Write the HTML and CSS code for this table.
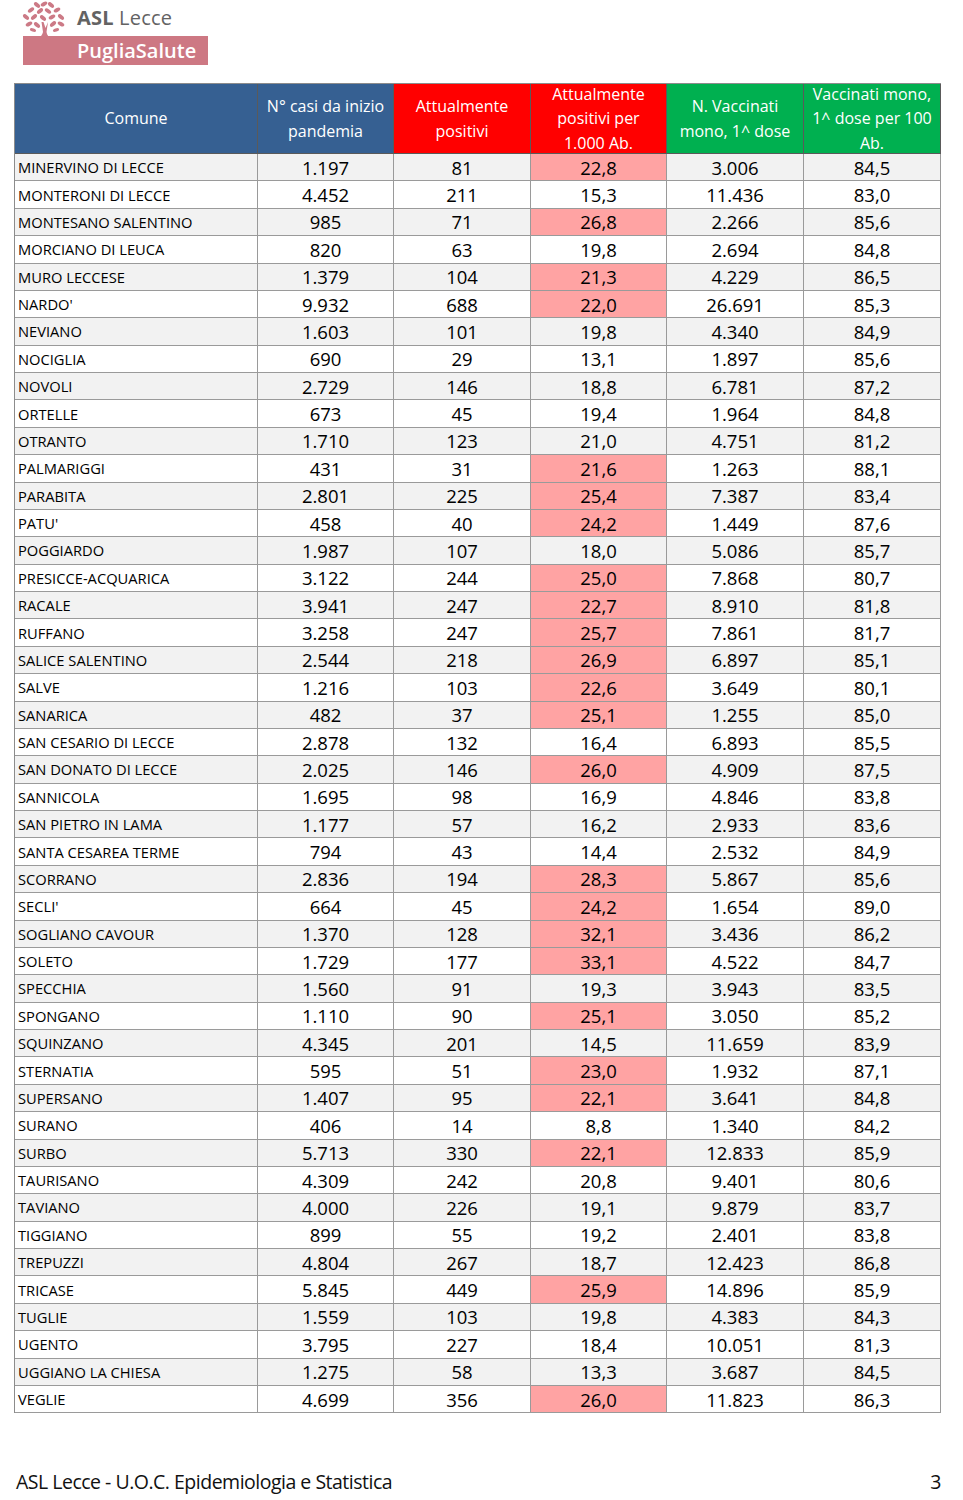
FILE: index.html
```html
<!DOCTYPE html>
<html lang="it">
<head>
<meta charset="utf-8">
<link rel="stylesheet" href="styles.css">
</head>
<body>
<div class="page">
  <header class="logo">
    <svg class="tree" width="48" height="44" viewBox="0 0 48 44">
      <g fill="#cc7a86">
        <ellipse cx="23" cy="4" rx="3.6" ry="1.9" transform="rotate(-30 23 4)"/>
        <ellipse cx="16" cy="5" rx="3.6" ry="1.9" transform="rotate(40 16 5)"/>
        <ellipse cx="30" cy="5" rx="3.6" ry="1.9" transform="rotate(40 30 5)"/>
        <ellipse cx="10" cy="10" rx="3.6" ry="1.9" transform="rotate(-35 10 10)"/>
        <ellipse cx="19" cy="11" rx="3.6" ry="1.9" transform="rotate(-40 19 11)"/>
        <ellipse cx="27" cy="11" rx="3.6" ry="1.9" transform="rotate(35 27 11)"/>
        <ellipse cx="36" cy="10" rx="3.6" ry="1.9" transform="rotate(-30 36 10)"/>
        <ellipse cx="5" cy="17" rx="3.6" ry="1.9" transform="rotate(40 5 17)"/>
        <ellipse cx="13" cy="17" rx="3.6" ry="1.9" transform="rotate(-40 13 17)"/>
        <ellipse cx="22" cy="18" rx="3.6" ry="1.9" transform="rotate(40 22 18)"/>
        <ellipse cx="31" cy="17" rx="3.6" ry="1.9" transform="rotate(-30 31 17)"/>
        <ellipse cx="40" cy="17" rx="3.6" ry="1.9" transform="rotate(40 40 17)"/>
        <ellipse cx="8" cy="24" rx="3.6" ry="1.9" transform="rotate(-30 8 24)"/>
        <ellipse cx="16" cy="25" rx="3.6" ry="1.9" transform="rotate(40 16 25)"/>
        <ellipse cx="32" cy="24" rx="3.6" ry="1.9" transform="rotate(-40 32 24)"/>
        <ellipse cx="40" cy="24" rx="3.6" ry="1.9" transform="rotate(30 40 24)"/>
        <ellipse cx="12" cy="30" rx="3.2" ry="1.7" transform="rotate(20 12 30)"/>
        <ellipse cx="35" cy="30" rx="3.2" ry="1.7" transform="rotate(-20 35 30)"/>
        <path d="M20.5 22 L22 32 Q21 37 15 40 L32 40 Q26 37 25.5 32 L27 22 L24.5 28 L22.5 22 Z"/>
      </g>
    </svg>
    <span class="asl">ASL <span class="lecce">Lecce</span></span>
    <div class="puglia">PugliaSalute</div>
  </header>

  <div class="data" id="grid">
    <div class="th h-blue">Comune</div>
    <div class="th h-blue">N° casi da inizio<br>pandemia</div>
    <div class="th h-red">Attualmente<br>positivi</div>
    <div class="th h-red">Attualmente<br>positivi per<br>1.000 Ab.</div>
    <div class="th h-green">N. Vaccinati<br>mono, 1^ dose</div>
    <div class="th h-green">Vaccinati mono,<br>1^ dose per 100<br>Ab.</div>
  </div>

  <footer class="footer">
    <span>ASL Lecce - U.O.C. Epidemiologia e Statistica</span>
    <span>3</span>
  </footer>
</div>
<script src="app.js"></script>
</body>
</html>
```
FILE: app.js
```js
const data = [
["MINERVINO DI LECCE","1.197","81","22,8","3.006","84,5",1],
["MONTERONI DI LECCE","4.452","211","15,3","11.436","83,0",0],
["MONTESANO SALENTINO","985","71","26,8","2.266","85,6",1],
["MORCIANO DI LEUCA","820","63","19,8","2.694","84,8",0],
["MURO LECCESE","1.379","104","21,3","4.229","86,5",1],
["NARDO'","9.932","688","22,0","26.691","85,3",1],
["NEVIANO","1.603","101","19,8","4.340","84,9",0],
["NOCIGLIA","690","29","13,1","1.897","85,6",0],
["NOVOLI","2.729","146","18,8","6.781","87,2",0],
["ORTELLE","673","45","19,4","1.964","84,8",0],
["OTRANTO","1.710","123","21,0","4.751","81,2",0],
["PALMARIGGI","431","31","21,6","1.263","88,1",1],
["PARABITA","2.801","225","25,4","7.387","83,4",1],
["PATU'","458","40","24,2","1.449","87,6",1],
["POGGIARDO","1.987","107","18,0","5.086","85,7",0],
["PRESICCE-ACQUARICA","3.122","244","25,0","7.868","80,7",1],
["RACALE","3.941","247","22,7","8.910","81,8",1],
["RUFFANO","3.258","247","25,7","7.861","81,7",1],
["SALICE SALENTINO","2.544","218","26,9","6.897","85,1",1],
["SALVE","1.216","103","22,6","3.649","80,1",1],
["SANARICA","482","37","25,1","1.255","85,0",1],
["SAN CESARIO DI LECCE","2.878","132","16,4","6.893","85,5",0],
["SAN DONATO DI LECCE","2.025","146","26,0","4.909","87,5",1],
["SANNICOLA","1.695","98","16,9","4.846","83,8",0],
["SAN PIETRO IN LAMA","1.177","57","16,2","2.933","83,6",0],
["SANTA CESAREA TERME","794","43","14,4","2.532","84,9",0],
["SCORRANO","2.836","194","28,3","5.867","85,6",1],
["SECLI'","664","45","24,2","1.654","89,0",1],
["SOGLIANO CAVOUR","1.370","128","32,1","3.436","86,2",1],
["SOLETO","1.729","177","33,1","4.522","84,7",1],
["SPECCHIA","1.560","91","19,3","3.943","83,5",0],
["SPONGANO","1.110","90","25,1","3.050","85,2",1],
["SQUINZANO","4.345","201","14,5","11.659","83,9",0],
["STERNATIA","595","51","23,0","1.932","87,1",1],
["SUPERSANO","1.407","95","22,1","3.641","84,8",1],
["SURANO","406","14","8,8","1.340","84,2",0],
["SURBO","5.713","330","22,1","12.833","85,9",1],
["TAURISANO","4.309","242","20,8","9.401","80,6",0],
["TAVIANO","4.000","226","19,1","9.879","83,7",0],
["TIGGIANO","899","55","19,2","2.401","83,8",0],
["TREPUZZI","4.804","267","18,7","12.423","86,8",0],
["TRICASE","5.845","449","25,9","14.896","85,9",1],
["TUGLIE","1.559","103","19,8","4.383","84,3",0],
["UGENTO","3.795","227","18,4","10.051","81,3",0],
["UGGIANO LA CHIESA","1.275","58","13,3","3.687","84,5",0],
["VEGLIE","4.699","356","26,0","11.823","86,3",1]
];
const grid = document.getElementById("grid");
data.forEach((r, i) => {
  r.slice(0, 6).forEach((v, j) => {
    const c = document.createElement("div");
    c.textContent = v;
    c.className = "td " + (j === 0 ? "name" : "num") + (i % 2 === 0 ? " odd" : " even");
    if (j === 3 && r[6]) c.classList.add("hi");
    grid.appendChild(c);
  });
});
```
FILE: styles.css
```css
html, body {
  margin: 0;
  padding: 0;
  background: #ffffff;
}
.page {
  width: 963px;
  height: 1500px;
  position: relative;
  font-family: "Open Sans", "Liberation Sans", sans-serif;
  color: #000;
}
.logo {
  position: relative;
  height: 83px;
}
.tree {
  position: absolute;
  left: 21px;
  top: 0;
}
.asl {
  position: absolute;
  left: 77px;
  top: 4px;
  font-family: "Open Sans", sans-serif;
  font-weight: 700;
  font-size: 20px;
  color: #636363;
  letter-spacing: 0.2px;
}
.asl .lecce {
  font-weight: 400;
}
.puglia {
  position: absolute;
  left: 23px;
  top: 36px;
  width: 185px;
  height: 29px;
  background: #cd7883;
  color: #fff;
  font-family: "Open Sans", sans-serif;
  font-weight: 600;
  font-size: 20px;
  line-height: 29px;
  box-sizing: border-box;
  padding-left: 54px;
}
.data {
  margin-left: 14px;
  width: 927px;
  box-sizing: border-box;
  display: grid;
  grid-template-columns: 243px 136px 137px 136px 137px 137px;
  grid-template-rows: 70px repeat(46, 27.39px);
  border-left: 1px solid #8c8c8c;
  border-top: 1px solid #8c8c8c;
}
.th, .td {
  box-sizing: border-box;
  border-right: 1px solid #9a9a9a;
  border-bottom: 1px solid #9a9a9a;
  display: flex;
  align-items: center;
  min-width: 0;
  overflow: hidden;
  white-space: nowrap;
}
.th {
  justify-content: center;
  text-align: center;
  color: #fff;
  font-size: 16px;
  line-height: 24.5px;
  border-color: #5a5a5a;
}
.h-blue { background: #366092; }
.h-red { background: #ff0000; }
.h-green { background: #00b050; }
.td.odd { background: #f2f2f2; }
.td.even { background: #ffffff; }
.td.name {
  font-size: 14.7px;
  padding-left: 3px;
}
.td.num {
  justify-content: center;
  font-size: 18.5px;
}
.td.hi { background: #ffa3a3; }
.footer {
  position: absolute;
  left: 16px;
  right: 22px;
  top: 1468px;
  display: flex;
  justify-content: space-between;
  font-family: "Open Sans", sans-serif;
  font-size: 19.5px;
  color: #111;
  letter-spacing: -0.5px;
}
```
